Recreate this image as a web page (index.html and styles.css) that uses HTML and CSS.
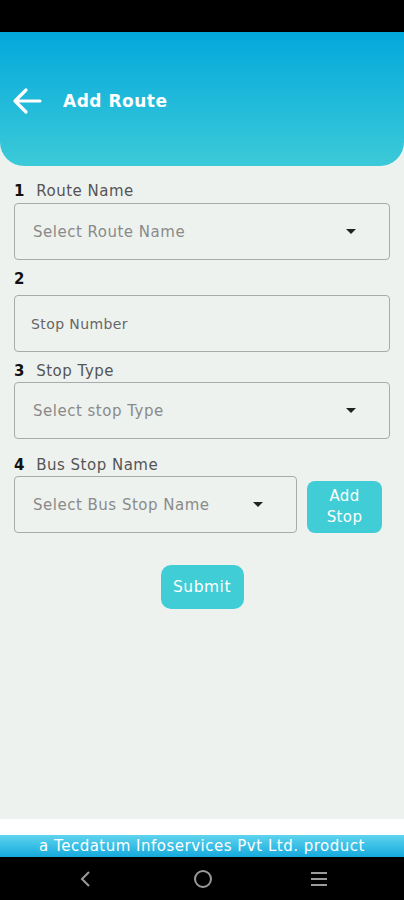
FILE: index.html
```html
<!DOCTYPE html>
<html lang="en">
<head>
    <meta charset="UTF-8">
    <meta name="viewport" content="width=device-width, initial-scale=1.0">
    <title>Add Route</title>
    <link rel="stylesheet" href="styles.css">
</head>
<body>
    <div class="status-bar"></div>

    <div class="header">
        <svg class="back" width="32" height="32" viewBox="0 0 32 32">
            <path d="M29 16H4M15 5L4 16l11 11" fill="none" stroke="#fff" stroke-width="3.2" stroke-linecap="round" stroke-linejoin="round"/>
        </svg>
        <h1>Add Route</h1>
    </div>

    <div class="form">
        <label class="field-label first"><b>1</b> Route Name</label>
        <div class="box select">
            <span>Select Route Name</span>
            <span class="caret"></span>
        </div>

        <label class="field-label second"><b>2</b></label>
        <div class="box input">
            <span>Stop Number</span>
        </div>

        <label class="field-label"><b>3</b> Stop Type</label>
        <div class="box select">
            <span>Select stop Type</span>
            <span class="caret"></span>
        </div>

        <label class="field-label fourth"><b>4</b> Bus Stop Name</label>
        <div class="stop-row">
            <div class="box select short">
                <span>Select Bus Stop Name</span>
                <span class="caret"></span>
            </div>
            <button type="button" class="add-stop">Add<br>Stop</button>
        </div>

        <div class="submit-wrap">
            <button type="button" class="submit">Submit</button>
        </div>
    </div>

    <div class="footer-space"></div>
    <div class="footer">a Tecdatum Infoservices Pvt Ltd. product</div>

    <div class="nav-bar">
        <svg width="20" height="20" viewBox="0 0 20 20">
            <path d="M13 3L6 10l7 7" fill="none" stroke="#9a9a9a" stroke-width="2"/>
        </svg>
        <svg width="20" height="20" viewBox="0 0 20 20">
            <circle cx="10" cy="10" r="8" fill="none" stroke="#9a9a9a" stroke-width="2"/>
        </svg>
        <svg width="20" height="20" viewBox="0 0 20 20">
            <path d="M2 4h16M2 10h16M2 16h16" stroke="#9a9a9a" stroke-width="2"/>
        </svg>
    </div>
</body>
</html>
```

FILE: styles.css
```css
body {
    margin: 0;
    width: 404px;
    height: 900px;
    background-color: #eef2ef;
    font-family: 'DejaVu Sans', sans-serif;
    display: flex;
    flex-direction: column;
    overflow: hidden;
}

.status-bar {
    height: 32px;
    background-color: #000;
}

.header {
    height: 131px;
    padding: 3px 0 0 11px;
    background: linear-gradient(to bottom, #03a8dc, #3ccad8);
    border-radius: 0 0 24px 24px;
    display: flex;
    align-items: center;
}

.back {
    margin-right: 20px;
}

h1 {
    color: #fff;
    font-size: 17px;
    letter-spacing: 0.5px;
    font-weight: bold;
    margin: 0;
}

.form {
    padding: 14px 14px 0 14px;
    flex: 1;
}

.field-label {
    display: block;
    margin-top: 8px;
    height: 22px;
    line-height: 22px;
    font-size: 15px;
    letter-spacing: 0.5px;
    color: #555;
}

.field-label.first {
    margin-top: 0;
    margin-bottom: 1px;
}

.field-label.second {
    margin-bottom: 5px;
}

.field-label.fourth {
    margin-top: 15px;
}

.field-label b {
    color: #111;
    margin-right: 6px;
}

.box {
    box-sizing: border-box;
    height: 57px;
    border: 1px solid #a9abaa;
    border-radius: 4px;
    display: flex;
    align-items: center;
    padding: 0 33px 0 18px;
    font-size: 15px;
    letter-spacing: 0.5px;
    color: #8a8a8a;
}

.box.select {
    justify-content: space-between;
}

.box.input {
    padding-left: 16px;
    font-size: 14px;
    letter-spacing: 0.4px;
    color: #666;
}

.caret {
    width: 0;
    height: 0;
    border-left: 5px solid transparent;
    border-right: 5px solid transparent;
    border-top: 5px solid #222;
}

.stop-row {
    display: flex;
    align-items: flex-start;
}

.box.short {
    width: 283px;
}

.add-stop {
    margin: 5px 0 0 10px;
    width: 75px;
    height: 52px;
    background-color: #41cdd6;
    color: #fff;
    border: none;
    border-radius: 8px;
    font-family: inherit;
    font-size: 15px;
    letter-spacing: 0.4px;
    line-height: 21px;
}

.submit-wrap {
    display: flex;
    justify-content: center;
    margin-top: 32px;
}

.submit {
    width: 83px;
    height: 44px;
    background-color: #41cdd6;
    color: #fff;
    border: none;
    border-radius: 10px;
    font-family: inherit;
    font-size: 15.5px;
    letter-spacing: 0.5px;
}

.footer-space {
    height: 16px;
    background-color: #fff;
}

.footer {
    height: 22px;
    background: linear-gradient(to bottom, #5fd4ee, #15a9dc);
    color: #fff;
    font-size: 15px;
    letter-spacing: 0.5px;
    text-align: center;
    line-height: 22px;
    white-space: nowrap;
}

.nav-bar {
    height: 43px;
    background-color: #000;
    display: flex;
    justify-content: space-between;
    align-items: center;
    padding: 0 75px 0 76px;
}
```
